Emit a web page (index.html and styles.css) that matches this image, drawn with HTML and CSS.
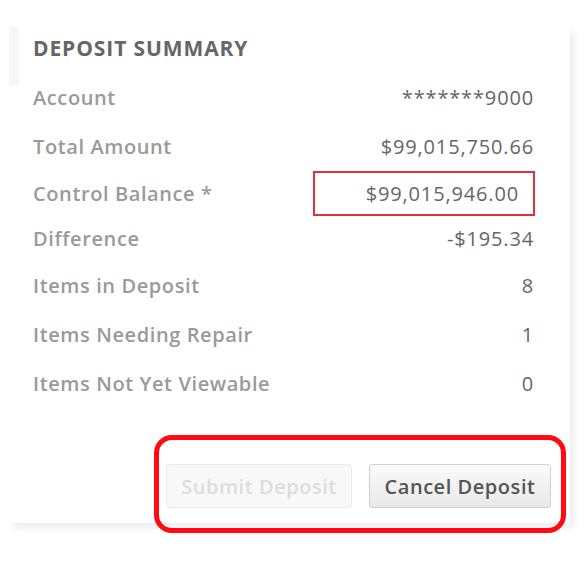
FILE: index.html
```html
<!DOCTYPE html>
<html>
<head>
<meta charset="utf-8">
<link rel="stylesheet" href="styles.css">
</head>
<body>
<div class="panel">
  <h2 class="title">DEPOSIT SUMMARY</h2>
  <div class="rows">
    <div class="row"><span class="label">Account</span><span class="value">*******9000</span></div>
    <div class="row"><span class="label">Total Amount</span><span class="value">$99,015,750.66</span></div>
    <div class="row row-control"><span class="label">Control Balance *</span><span class="value boxed">$99,015,946.00</span></div>
    <div class="row row-diff"><span class="label">Difference</span><span class="value">-$195.34</span></div>
    <div class="row row-tall"><span class="label">Items in Deposit</span><span class="value">8</span></div>
    <div class="row row-tall"><span class="label">Items Needing Repair</span><span class="value">1</span></div>
    <div class="row row-tall"><span class="label">Items Not Yet Viewable</span><span class="value">0</span></div>
  </div>
  <div class="actions">
    <button class="btn btn-disabled" disabled>Submit Deposit</button>
    <button class="btn btn-cancel">Cancel Deposit</button>
  </div>
</div>
<div class="highlight"></div>
</body>
</html>
```
FILE: styles.css
```css
html, body {
  margin: 0;
  padding: 0;
  background: #ffffff;
}
body {
  font-family: "Open Sans", "Noto Sans", sans-serif;
  width: 587px;
  height: 562px;
  position: relative;
  overflow: hidden;
}
.panel {
  position: relative;
  margin: 27px 0 0 9px;
  width: 561px;
  height: 496px;
  background: #fff;
  box-sizing: border-box;
  padding: 0 36px 0 24px;
  box-shadow: 4px 5px 7px rgba(0, 0, 0, 0.07);
}
.panel::before {
  content: "";
  position: absolute;
  left: 0;
  top: 0;
  width: 10px;
  height: 59px;
  background: #f7f7f7;
}
.title {
  margin: 0;
  padding-top: 8px;
  height: 38px;
  font-size: 21px;
  line-height: 26px;
  letter-spacing: 0.9px;
  font-weight: 700;
  color: #666;
}
.rows {
  display: flex;
  flex-direction: column;
}
.row {
  display: flex;
  justify-content: space-between;
  align-items: center;
  height: 49px;
}
.row-control { height: 45px; }
.row-diff { height: 45px; }
.label {
  font-size: 20px;
  letter-spacing: 0.6px;
  font-weight: 600;
  color: #9a9a9a;
}
.value {
  font-size: 20px;
  letter-spacing: 0.85px;
  color: #666;
}
.boxed {
  width: 222px;
  height: 45px;
  box-sizing: border-box;
  border: 2px solid #e0303c;
  text-align: right;
  padding-right: 14px;
  line-height: 41px;
  margin-right: -1px;
}
.actions {
  display: flex;
  justify-content: flex-end;
  gap: 17px;
  margin-top: 56px;
  margin-right: -17px;
}
.btn {
  height: 44px;
  border-radius: 3px;
  font-family: inherit;
  font-size: 20px;
  letter-spacing: 0.55px;
  font-weight: 600;
  padding: 0;
}
.btn-disabled {
  width: 186px;
  background: #f8f8f8;
  border: 1px solid #ececec;
  color: #ddd;
}
.btn-cancel {
  width: 182px;
  background: linear-gradient(#fafafa, #e9e9e9);
  border: 1px solid #cfcfcf;
  color: #555;
}
.highlight {
  position: absolute;
  left: 154px;
  top: 435px;
  width: 412px;
  height: 98px;
  box-sizing: border-box;
  border: 5px solid #ff0a14;
  border-radius: 18px;
}
```
